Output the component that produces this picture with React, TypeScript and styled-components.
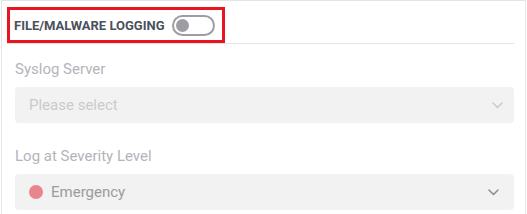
import styled, { createGlobalStyle } from "styled-components";

const GlobalStyle = createGlobalStyle`
  html, body {
    margin: 0;
    padding: 0;
    background: #ffffff;
    font-family: Roboto, "Liberation Sans", Arial, sans-serif;
  }
`;

const Panel = styled.div`
  box-sizing: border-box;
  width: 525px;
  height: 214px;
  margin-left: 1px;
  border: 1px solid #e4e4e6;
  border-bottom: none;
  padding: 6px 11px 0 5px;
`;

const Header = styled.div`
  display: flex;
  align-items: center;
  border-bottom: 1px solid #e6e6e8;
`;

const Highlight = styled.div`
  box-sizing: border-box;
  display: inline-flex;
  align-items: center;
  gap: 7px;
  height: 36px;
  padding: 0 7px 0 4px;
  border: 3px solid #e8141f;
`;

const Title = styled.span`
  font-size: 13px;
  font-weight: 700;
  color: #4b505c;
`;

const Toggle = styled.div<{ on?: boolean }>`
  box-sizing: border-box;
  width: 43px;
  height: 21px;
  border: 2px solid #9d9da3;
  border-radius: 11px;
  display: flex;
  align-items: center;
  padding: 0 2px;
  justify-content: ${(p) => (p.on ? "flex-end" : "flex-start")};
`;

const Knob = styled.span`
  width: 13px;
  height: 13px;
  border-radius: 50%;
  background: #9d9da3;
`;

const Body = styled.div`
  padding: 16px 0 0 8px;
  display: flex;
  flex-direction: column;
`;

const Field = styled.div`
  display: flex;
  flex-direction: column;
  gap: 8px;
  & + & {
    margin-top: 24px;
  }
`;

const Label = styled.label`
  font-size: 15px;
  line-height: 19px;
  color: #b4b4ba;
`;

const Select = styled.div<{ chevronPad: number }>`
  box-sizing: border-box;
  height: 36px;
  border-radius: 4px;
  background: #f2f2f2;
  display: flex;
  align-items: center;
  padding: 0 ${(p) => p.chevronPad}px 0 14px;
  gap: 8px;
`;

const Value = styled.span<{ muted?: boolean }>`
  flex: 1;
  font-size: 15px;
  color: ${(p) => (p.muted ? "#cbcbcd" : "#9b9b9e")};
`;

const Dot = styled.span`
  width: 14px;
  height: 14px;
  border-radius: 50%;
  background: #e8858f;
`;

const Chevron = ({ color }: { color: string }) => (
  <svg width="11" height="7" viewBox="0 0 11 7" fill="none">
    <path d="M1 1l4.5 4.5L10 1" stroke={color} strokeWidth="1.5" strokeLinecap="round" strokeLinejoin="round" />
  </svg>
);

export default function App() {
  return (
    <>
      <GlobalStyle />
      <Panel>
        <Header>
          <Highlight>
            <Title>FILE/MALWARE LOGGING</Title>
            <Toggle>
              <Knob />
            </Toggle>
          </Highlight>
        </Header>
        <Body>
          <Field>
            <Label>Syslog Server</Label>
            <Select chevronPad={11}>
              <Value muted>Please select</Value>
              <Chevron color="#cacacc" />
            </Select>
          </Field>
          <Field>
            <Label>Log at Severity Level</Label>
            <Select chevronPad={15}>
              <Dot />
              <Value>Emergency</Value>
              <Chevron color="#8c8c90" />
            </Select>
          </Field>
        </Body>
      </Panel>
    </>
  );
}
